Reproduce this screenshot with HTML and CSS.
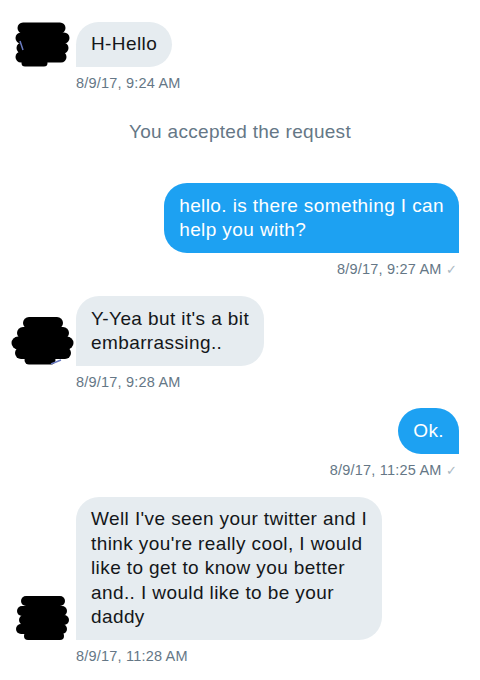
FILE: index.html
```html
<!DOCTYPE html>
<html lang="en">
<head>
<meta charset="utf-8">
<title>Conversation</title>
<link rel="stylesheet" href="styles.css">
</head>
<body>
<main class="thread">
  <section class="group received first">
    <div class="row">
      <svg class="avatar" viewBox="0 0 56 46" aria-hidden="true">
        <g stroke="#000" stroke-linecap="round" fill="none">
          <path d="M9 7 H46" stroke-width="11"/>
          <path d="M7 17 H50" stroke-width="11"/>
          <path d="M8 27 H49" stroke-width="11"/>
          <path d="M7 36 H47" stroke-width="11"/>
          <path d="M11 42 H30" stroke-width="7"/>
        </g>
        <path d="M6 20 L9 29" stroke="#6a7bc0" stroke-width="1.5"/>
      </svg>
      <div class="bubble gray">H-Hello</div>
    </div>
    <div class="meta">8/9/17, 9:24 AM</div>
  </section>

  <p class="system">You accepted the request</p>

  <section class="group sent">
    <div class="bubble blue">hello. is there something I can<br>help you with?</div>
    <div class="meta">8/9/17, 9:27 AM <span class="check">&#10003;</span></div>
  </section>

  <section class="group received">
    <div class="row">
      <svg class="avatar av2" viewBox="0 0 64 50" aria-hidden="true">
        <g stroke="#000" stroke-linecap="round" fill="none">
          <path d="M18 7 H46" stroke-width="12"/>
          <path d="M12 17 H52" stroke-width="12"/>
          <path d="M7 27 H56" stroke-width="13"/>
          <path d="M10 37 H54" stroke-width="12"/>
          <path d="M18 44 H40" stroke-width="9"/>
        </g>
        <path d="M40 48 L50 44" stroke="#6a7bc0" stroke-width="1.5"/>
      </svg>
      <div class="bubble gray">Y-Yea but it's a bit<br>embarrassing..</div>
    </div>
    <div class="meta">8/9/17, 9:28 AM</div>
  </section>

  <section class="group sent">
    <div class="bubble blue">Ok.</div>
    <div class="meta">8/9/17, 11:25 AM <span class="check">&#10003;</span></div>
  </section>

  <section class="group received">
    <div class="row">
      <svg class="avatar av3" viewBox="0 0 56 46" aria-hidden="true">
        <g stroke="#000" stroke-linecap="round" fill="none">
          <path d="M12 6 H46" stroke-width="10"/>
          <path d="M8 16 H48" stroke-width="10"/>
          <path d="M10 25 H50" stroke-width="10"/>
          <path d="M7 34 H48" stroke-width="10"/>
          <path d="M14 41 H46" stroke-width="8"/>
        </g>
      </svg>
      <div class="bubble gray">Well I've seen your twitter and I<br>think you're really cool, I would<br>like to get to know you better<br>and.. I would like to be your<br>daddy</div>
    </div>
    <div class="meta">8/9/17, 11:28 AM</div>
  </section>
</main>
</body>
</html>
```

FILE: styles.css
```css
html, body {
  margin: 0;
  padding: 0;
  background: #ffffff;
}

body {
  font-family: "Liberation Sans", Arial, sans-serif;
  color: #14171a;
  width: 480px;
  height: 680px;
  overflow: hidden;
}

.thread {
  display: flex;
  flex-direction: column;
  padding: 21px 21px 0 0;
}

.group {
  display: flex;
  flex-direction: column;
  margin-top: 17px;
}

.group.first {
  margin-top: 0;
}

.received {
  align-items: flex-start;
}

.sent {
  align-items: flex-end;
}

.row {
  display: flex;
  align-items: flex-end;
}

.avatar {
  width: 56px;
  height: 46px;
  margin: 0 6px 0 14px;
  flex: none;
  overflow: visible;
}

.av2 {
  width: 64px;
  height: 50px;
  margin: 0 1px 0 11px;
}

.av3 {
  margin: 0 6px -1px 14px;
}

.bubble {
  font-size: 19px;
  letter-spacing: 0.4px;
  line-height: 24.5px;
  padding: 10.5px 15px;
  border-radius: 23px;
  white-space: nowrap;
}

.gray {
  background: #e6ecf0;
  color: #14171a;
  border-bottom-left-radius: 0;
}

.blue {
  background: #1da1f2;
  color: #ffffff;
  border-bottom-right-radius: 0;
}

.meta {
  font-size: 14.5px;
  letter-spacing: 0.2px;
  line-height: 18px;
  color: #657786;
  margin-top: 7px;
}

.received .meta {
  margin-left: 76px;
}

.sent .meta {
  margin-right: 2px;
}

.check {
  color: #aab8c2;
  font-size: 13px;
}

.system {
  margin: 29px 0 0 21px;
  text-align: center;
  font-size: 19px;
  letter-spacing: 0.3px;
  line-height: 22px;
  color: #657786;
}

.system + .group {
  margin-top: 40px;
}
```
